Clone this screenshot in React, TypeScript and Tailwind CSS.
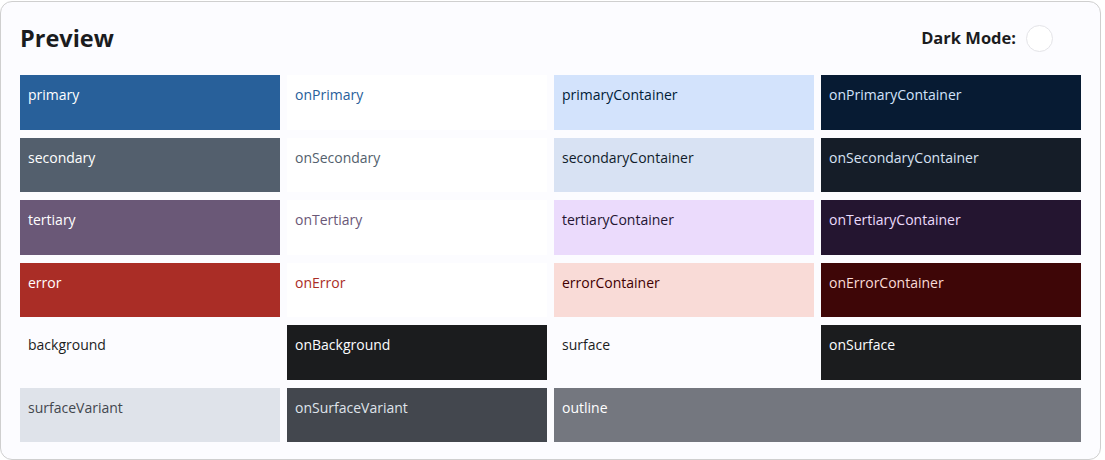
const swatches = [
  { name: "primary", bg: "bg-[#28609a]", fg: "text-white" },
  { name: "onPrimary", bg: "bg-white", fg: "text-[#28609a]" },
  { name: "primaryContainer", bg: "bg-[#d3e3fc]", fg: "text-[#001c38]" },
  { name: "onPrimaryContainer", bg: "bg-[#071b33]", fg: "text-[#d3e3fc]" },
  { name: "secondary", bg: "bg-[#535f6d]", fg: "text-white" },
  { name: "onSecondary", bg: "bg-white", fg: "text-[#535f6d]" },
  { name: "secondaryContainer", bg: "bg-[#d8e2f3]", fg: "text-[#101c2b]" },
  { name: "onSecondaryContainer", bg: "bg-[#151d28]", fg: "text-[#d8e2f3]" },
  { name: "tertiary", bg: "bg-[#6a5877]", fg: "text-white" },
  { name: "onTertiary", bg: "bg-white", fg: "text-[#6a5877]" },
  { name: "tertiaryContainer", bg: "bg-[#ebdbfc]", fg: "text-[#241532]" },
  { name: "onTertiaryContainer", bg: "bg-[#241530]", fg: "text-[#ebdbfc]" },
  { name: "error", bg: "bg-[#aa2d26]", fg: "text-white" },
  { name: "onError", bg: "bg-white", fg: "text-[#aa2d26]" },
  { name: "errorContainer", bg: "bg-[#f9dbd7]", fg: "text-[#410002]" },
  { name: "onErrorContainer", bg: "bg-[#3e0607]", fg: "text-[#f9dbd7]" },
  { name: "background", bg: "bg-[#fcfcff]", fg: "text-[#1b1c1e]" },
  { name: "onBackground", bg: "bg-[#1b1c1e]", fg: "text-[#fcfcff]" },
  { name: "surface", bg: "bg-[#fcfcff]", fg: "text-[#1b1c1e]" },
  { name: "onSurface", bg: "bg-[#1b1c1e]", fg: "text-[#fcfcff]" },
  { name: "surfaceVariant", bg: "bg-[#dfe3ea]", fg: "text-[#43474e]" },
  { name: "onSurfaceVariant", bg: "bg-[#43474e]", fg: "text-[#dfe3ea]" },
  { name: "outline", bg: "bg-[#74777f]", fg: "text-white", wide: true },
];

export default function App() {
  return (
    <div className="min-h-screen bg-white font-['Open_Sans',sans-serif]">
      <div className="mt-px w-[1101px] rounded-xl border border-[#cfcfcf] bg-[#fcfcff] px-[19px] pt-[19px] pb-[17px]">
        <header className="mb-[20px] flex h-[34px] items-center justify-between">
          <h1 className="text-[23.5px] font-bold leading-8 text-[#1b1c1e]">Preview</h1>
          <div className="mr-[28px] flex items-center gap-[10px]">
            <span className="text-[16.5px] font-bold text-[#1b1c1e]">Dark Mode:</span>
            <span className="h-[27px] w-[27px] rounded-full border border-[#e4e4e8] bg-white" />
          </div>
        </header>

        {/* Colour scheme swatches */}
        <div className="grid grid-cols-4 gap-x-[7px] gap-y-[8px]">
          {swatches.map((s) => (
            <div
              key={s.name}
              className={`h-[54.5px] px-2 pt-[10px] text-[14px] leading-5 ${s.bg} ${s.fg} ${s.wide ? "col-span-2" : ""}`}
            >
              {s.name}
            </div>
          ))}
        </div>
      </div>
    </div>
  );
}
